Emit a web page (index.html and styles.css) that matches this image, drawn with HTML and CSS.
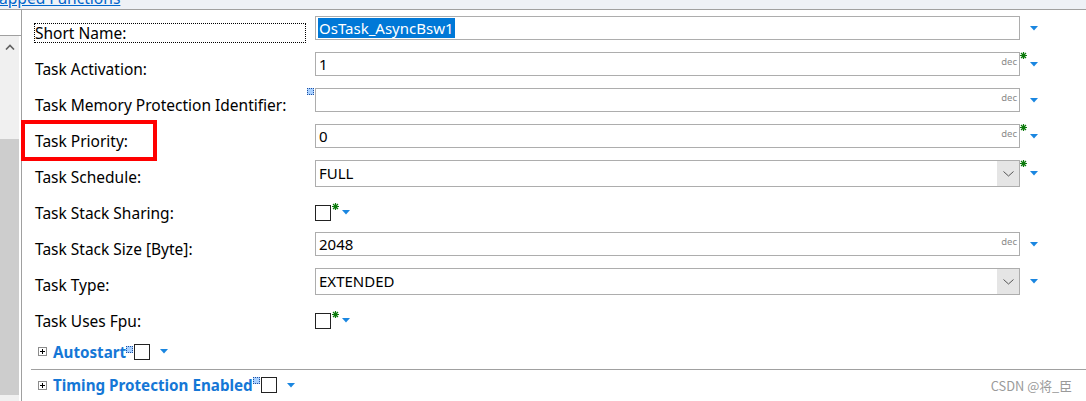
FILE: index.html
```html
<!DOCTYPE html>
<html>
<head>
<meta charset="utf-8">
<link rel="stylesheet" href="styles.css">
</head>
<body>
<div class="topbar"><span class="link">apped Functions</span></div>
<div class="main">
  <aside class="side">
    <div class="side-head"></div>
    <div class="scroll">
      <div class="scroll-up"><svg width="10" height="6" viewBox="0 0 10 6"><polyline points="1,5.5 5,1.5 9,5.5" fill="none" stroke="#606060" stroke-width="1.6"/></svg></div>
      <div class="track"><div class="thumb"></div></div>
    </div>
  </aside>
  <div class="content">
    <div class="form">
      <div class="row">
        <div class="label"><span class="ltext focus">Short Name:</span></div>
        <div class="field"><span class="val"><span class="sel">OsTask_AsyncBsw1</span></span></div>
        <div class="mark"></div>
        <svg class="arr" width="8" height="5" viewBox="0 0 8 5"><polygon points="0,0 8,0 4,4.5" fill="#1a86e0"/></svg>
      </div>
      <div class="row">
        <div class="label"><span class="ltext">Task Activation:</span></div>
        <div class="field"><span class="val">1</span><span class="dec">dec</span></div>
        <div class="mark"><svg width="7" height="7" viewBox="0 0 7 7"><path d="M3.5 0V7M0 3.5H7M1 1L6 6M6 1L1 6" stroke="#0b7a0b" stroke-width="1.2"/></svg></div>
        <svg class="arr" width="8" height="5" viewBox="0 0 8 5"><polygon points="0,0 8,0 4,4.5" fill="#1a86e0"/></svg>
      </div>
      <div class="row">
        <div class="label"><span class="ltext">Task Memory Protection Identifier:</span></div>
        <div class="field"><span class="badge"></span><span class="val"></span><span class="dec">dec</span></div>
        <div class="mark"></div>
        <svg class="arr" width="8" height="5" viewBox="0 0 8 5"><polygon points="0,0 8,0 4,4.5" fill="#1a86e0"/></svg>
      </div>
      <div class="row">
        <div class="label"><span class="ltext">Task Priority:</span><span class="redbox"></span></div>
        <div class="field"><span class="val">0</span><span class="dec">dec</span></div>
        <div class="mark"><svg width="7" height="7" viewBox="0 0 7 7"><path d="M3.5 0V7M0 3.5H7M1 1L6 6M6 1L1 6" stroke="#0b7a0b" stroke-width="1.2"/></svg></div>
        <svg class="arr" width="8" height="5" viewBox="0 0 8 5"><polygon points="0,0 8,0 4,4.5" fill="#1a86e0"/></svg>
      </div>
      <div class="row">
        <div class="label"><span class="ltext">Task Schedule:</span></div>
        <div class="select"><span class="val">FULL</span><span class="btn"><svg width="11" height="6" viewBox="0 0 11 6"><polyline points="0.5,0.5 5.5,5 10.5,0.5" fill="none" stroke="#555" stroke-width="1"/></svg></span></div>
        <div class="mark"><svg width="7" height="7" viewBox="0 0 7 7"><path d="M3.5 0V7M0 3.5H7M1 1L6 6M6 1L1 6" stroke="#0b7a0b" stroke-width="1.2"/></svg></div>
        <svg class="arr sarr" width="8" height="5" viewBox="0 0 8 5"><polygon points="0,0 8,0 4,4.5" fill="#1a86e0"/></svg>
      </div>
      <div class="row">
        <div class="label"><span class="ltext">Task Stack Sharing:</span></div>
        <div class="cbfield">
          <span class="cb"></span>
          <svg class="cbmark" width="7" height="7" viewBox="0 0 7 7"><path d="M3.5 0V7M0 3.5H7M1 1L6 6M6 1L1 6" stroke="#0b7a0b" stroke-width="1.2"/></svg>
          <svg class="cbarr" width="8" height="5" viewBox="0 0 8 5"><polygon points="0,0 8,0 4,4.5" fill="#1a86e0"/></svg>
        </div>
      </div>
      <div class="row">
        <div class="label"><span class="ltext">Task Stack Size [Byte]:</span></div>
        <div class="field"><span class="val">2048</span><span class="dec">dec</span></div>
        <div class="mark"></div>
        <svg class="arr" width="8" height="5" viewBox="0 0 8 5"><polygon points="0,0 8,0 4,4.5" fill="#1a86e0"/></svg>
      </div>
      <div class="row">
        <div class="label"><span class="ltext">Task Type:</span></div>
        <div class="select"><span class="val">EXTENDED</span><span class="btn"><svg width="11" height="6" viewBox="0 0 11 6"><polyline points="0.5,0.5 5.5,5 10.5,0.5" fill="none" stroke="#555" stroke-width="1"/></svg></span></div>
        <div class="mark"></div>
        <svg class="arr sarr" width="8" height="5" viewBox="0 0 8 5"><polygon points="0,0 8,0 4,4.5" fill="#1a86e0"/></svg>
      </div>
      <div class="row">
        <div class="label"><span class="ltext">Task Uses Fpu:</span></div>
        <div class="cbfield">
          <span class="cb"></span>
          <svg class="cbmark" width="7" height="7" viewBox="0 0 7 7"><path d="M3.5 0V7M0 3.5H7M1 1L6 6M6 1L1 6" stroke="#0b7a0b" stroke-width="1.2"/></svg>
          <svg class="cbarr" width="8" height="5" viewBox="0 0 8 5"><polygon points="0,0 8,0 4,4.5" fill="#1a86e0"/></svg>
        </div>
      </div>
    </div>
    <div class="group first">
      <svg class="exp" width="9" height="9" viewBox="0 0 9 9"><rect x="0.5" y="0.5" width="8" height="8" fill="#fff" stroke="#8c8c8c"/><path d="M2 4.5H7M4.5 2V7" stroke="#000"/></svg>
      <span class="gtitle">Autostart</span>
      <span class="gbadge"></span>
      <span class="cb"></span>
      <svg class="garr" width="8" height="5" viewBox="0 0 8 5"><polygon points="0,0 8,0 4,4.5" fill="#1a86e0"/></svg>
    </div>
    <div class="group second">
      <svg class="exp" width="9" height="9" viewBox="0 0 9 9"><rect x="0.5" y="0.5" width="8" height="8" fill="#fff" stroke="#8c8c8c"/><path d="M2 4.5H7M4.5 2V7" stroke="#000"/></svg>
      <span class="gtitle">Timing Protection Enabled</span>
      <span class="gbadge"></span>
      <span class="cb"></span>
      <svg class="garr" width="8" height="5" viewBox="0 0 8 5"><polygon points="0,0 8,0 4,4.5" fill="#1a86e0"/></svg>
    </div>
    <div class="watermark">CSDN @将_臣</div>
  </div>
</div>
</body>
</html>
```
FILE: styles.css
```css
* { box-sizing: border-box; }
html, body { margin: 0; padding: 0; }
body {
  width: 1086px;
  height: 401px;
  overflow: hidden;
  background: #fff;
  font-family: "Noto Sans", sans-serif;
  font-size: 15px;
  color: #000;
}
.topbar {
  height: 10px;
  background: #eef1f6;
  border-bottom: 1px solid #a0a0a0;
  overflow: hidden;
}
.topbar .link {
  display: block;
  margin-top: -12px;
  margin-left: -1px;
  line-height: 20px;
  font-size: 15.6px;
  color: #0066cc;
  text-decoration: underline;
}
.main { display: flex; height: 391px; }
.side {
  width: 22px;
  border-right: 1px solid #a0a0a0;
  display: flex;
  flex-direction: column;
  flex: none;
}
.side-head { height: 26px; border-bottom: 1px solid #a0a0a0; background: #fff; }
.scroll { width: 19px; flex: 1; background: #f0f0f0; display: flex; flex-direction: column; }
.scroll-up { height: 22px; display: flex; align-items: center; justify-content: center; }
.track { flex: 1; padding-top: 81px; }
.thumb { height: 256px; background: #cdcdcd; }

.content { flex: 1; position: relative; }
.form { padding-left: 12px; }
.row { display: flex; align-items: flex-start; height: 36px; }
.label { width: 281px; flex: none; padding-top: 13px; position: relative; }
.ltext {
  display: block;
  width: 272px;
  height: 20px;
  line-height: 18px;
  font-size: 15.5px;
  border: 1px dotted transparent;
  white-space: nowrap;
}
.ltext.focus { border-color: #000; }
.redbox {
  position: absolute;
  left: -13px;
  top: 2px;
  width: 136px;
  height: 41px;
  border: 4px solid #ff0000;
}
.field {
  width: 705px;
  flex: none;
  height: 24px;
  margin-top: 6px;
  border: 1px solid #adadad;
  display: flex;
  align-items: flex-start;
  position: relative;
}
.val { flex: 1; padding-left: 3px; line-height: 22px; white-space: nowrap; }
.sel { background: #0078d7; color: #fff; padding: 0 1px; display: inline-block; line-height: 20px; margin-top: 1px; margin-left: -1px; }
.dec { font-size: 9.5px; line-height: 10px; color: #8a8a8a; margin: 4px 2px 0 0; }
.badge {
  position: absolute;
  left: -9px;
  top: -1px;
  width: 7px;
  height: 7px;
  border: 1px dotted #1f4f9f;
  background: #a8d0ff;
}
.mark { width: 10px; flex: none; margin-top: 6px; height: 8px; display: flex; }
.arr { flex: none; margin-top: 16px; }
.sarr { margin-top: 17px; }
.select {
  width: 705px;
  flex: none;
  height: 27px;
  margin-top: 6px;
  border: 1px solid #adadad;
  display: flex;
  background: #fff;
}
.select .val { line-height: 25px; }
.select .btn { width: 22px; background: #e5e5e5; display: flex; align-items: center; justify-content: center; }
.cbfield { display: flex; align-items: flex-start; }
.cb {
  display: block;
  width: 16px;
  height: 16px;
  border: 1px solid #222;
  background: #fff;
  flex: none;
}
.cbfield .cb { margin-top: 15px; }
.cbmark { margin-top: 13px; margin-left: 1px; }
.cbarr { margin-top: 20px; margin-left: 3px; }

.group { display: flex; align-items: center; padding-left: 16px; }
.group.first { height: 35px; }
.group.second { height: 31px; margin-left: 9px; padding-left: 7px; border-top: 1px solid #a0a0a0; }
.exp { flex: none; margin-right: 6px; }
.gtitle { font-weight: bold; font-size: 15.2px; color: #1577d6; line-height: 20px; white-space: nowrap; }
.gbadge {
  align-self: flex-start;
  margin-top: 12px;
  width: 7px;
  height: 7px;
  border: 1px dotted #1f4f9f;
  background: #a8d0ff;
}
.group.second .gbadge { margin-top: 7px; }
.group .cb { margin-left: 1px; }
.garr { margin-left: 10px; }
.watermark {
  position: absolute;
  right: 14px;
  bottom: 6px;
  font-family: "Noto Sans CJK SC", "Noto Sans", sans-serif;
  font-size: 12.8px;
  color: #9a9a9a;
}
```
